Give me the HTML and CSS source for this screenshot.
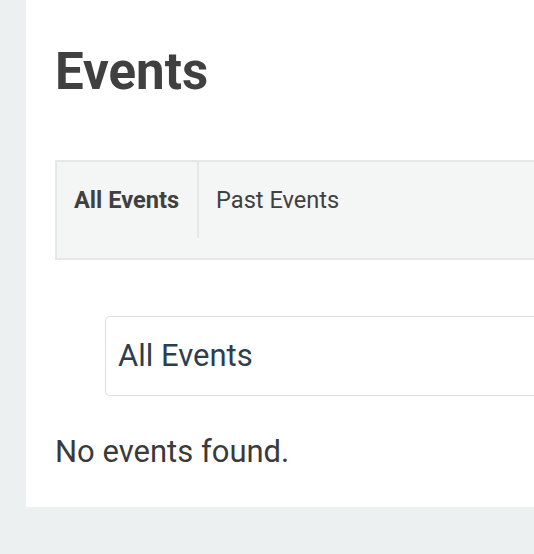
FILE: index.html
```html
<!DOCTYPE html>
<html>
<head>
<meta charset="utf-8">
<link rel="stylesheet" href="styles.css">
</head>
<body>
<div class="page">
  <main class="panel">
    <h1 class="title">Events</h1>
    <nav class="tabs">
      <ul class="tab-list">
        <li class="tab tab-active">All Events</li>
        <li class="tab">Past Events</li>
      </ul>
    </nav>
    <div class="filter">
      <div class="select">All Events</div>
    </div>
    <p class="empty">No events found.</p>
  </main>
</div>
</body>
</html>
```
FILE: styles.css
```css
html, body {
  margin: 0;
  padding: 0;
  background: #ecf0f1;
  overflow: hidden;
  font-family: Roboto, "Liberation Sans", sans-serif;
}
.page {
  padding-left: 26px;
  width: 700px;
}
.panel {
  background: #ffffff;
  padding: 42px 0 35px 29px;
}
.title {
  margin: 0;
  font-size: 51px;
  line-height: 60px;
  font-weight: 700;
  color: #404040;
}
.tabs {
  margin-top: 58px;
  background: #f4f5f5;
  border: 2px solid #e6e7e7;
  padding-bottom: 20px;
}
.tab-list {
  list-style: none;
  margin: 0;
  padding: 0;
  display: flex;
}
.tab {
  font-size: 23.6px;
  line-height: 76px;
  padding: 0 18px 0 17px;
  color: #404040;
  border-right: 2px solid #e6e7e7;
}
.tab + .tab {
  border-right: none;
}
.tab-active {
  font-weight: 700;
}
.filter {
  margin-top: 56px;
  padding-left: 50px;
}
.select {
  border: 1px solid #dedede;
  border-radius: 5px;
  border-right: none;
  border-top-right-radius: 0;
  border-bottom-right-radius: 0;
  height: 78px;
  line-height: 78px;
  padding-left: 12px;
  font-size: 31px;
  color: #2c3e50;
}
.empty {
  margin: 36px 0 0;
  font-size: 31px;
  line-height: 40px;
  color: #3a3a3a;
}
```
